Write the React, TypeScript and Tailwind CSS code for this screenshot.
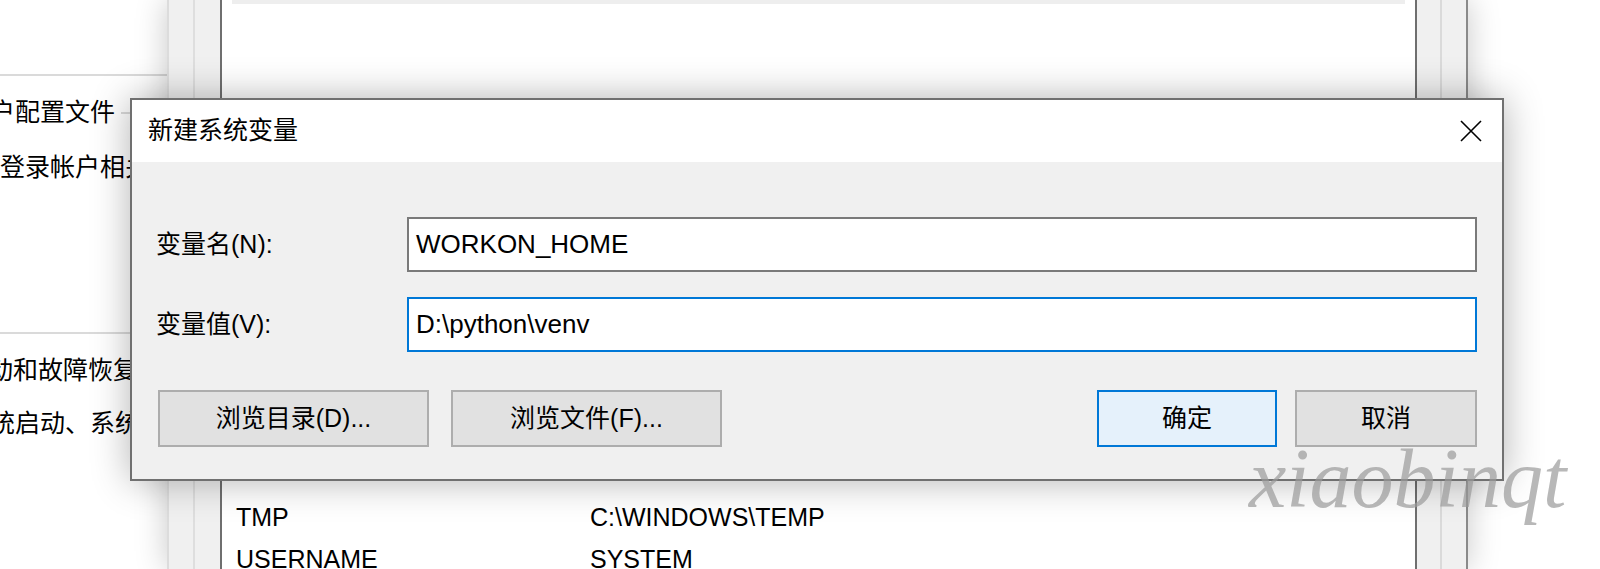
import React from 'react';

const ui = "font-['Liberation_Sans','Noto_Sans_CJK_SC',sans-serif]";

const rows = [
  { name: 'TEMP', value: 'C:\\WINDOWS\\TEMP' },
  { name: 'TMP', value: 'C:\\WINDOWS\\TEMP' },
  { name: 'USERNAME', value: 'SYSTEM' },
];

const CloseIcon = () => (
  <svg width="22" height="22" viewBox="0 0 22 22" fill="none">
    <path d="M1 1L21 21M21 1L1 21" stroke="#000" strokeWidth="1.6" />
  </svg>
);

const Field = ({ label, value, focused }: { label: string; value: string; focused?: boolean }) => (
  <div className="flex items-center">
    <div className="w-[275px] pl-[24px] text-[25px] text-black">{label}</div>
    <div
      className={`flex-1 h-[55px] bg-white border-2 flex items-center pl-[7px] text-[26px] text-black ${
        focused ? 'border-[#0078d7]' : 'border-[#7a7a7a]'
      }`}
    >
      {value}
    </div>
  </div>
);

const DialogButton = ({ label, width, primary }: { label: string; width: string; primary?: boolean }) => (
  <button
    className={`${width} h-[57px] border-2 text-[25px] text-black flex items-center justify-center ${
      primary ? 'bg-[#e5f1fb] border-[#0078d7]' : 'bg-[#e1e1e1] border-[#adadad]'
    }`}
  >
    {label}
  </button>
);

export default function App() {
  return (
    <div className={`relative w-[1600px] h-[569px] overflow-hidden bg-white ${ui}`}>
      <div className="flex h-full">
        {/* system properties window behind */}
        <div className="w-[167px] shrink-0 text-[25px] text-black whitespace-nowrap">
          <div className="mt-[74px] border-t-2 border-[#dadada]" />
          <div className="mt-[22px] flex items-center h-[30px]">
            <span className="-ml-[35px]">用户配置文件</span>
            <span className="ml-[6px] w-[40px] border-t-2 border-[#dadada]" />
          </div>
          <div className="mt-[25px] h-[30px] flex items-center">
            <span>登录帐户相关的桌面设置</span>
          </div>
          <div className="mt-[149px] border-t-2 border-[#dadada]" />
          <div className="mt-[22px] h-[30px] flex items-center">
            <span className="-ml-[37px]">启动和故障恢复</span>
          </div>
          <div className="mt-[23px] h-[30px] flex items-center">
            <span className="-ml-[35px]">系统启动、系统失败和调试信息</span>
          </div>
        </div>

        {/* environment variables window behind */}
        <div className="w-[1301px] shrink-0 flex bg-[#f0f0f0] border-x-2 border-l-[#dcdcdc] border-r-[#8a8a8a] shadow-[0_0_30px_rgba(0,0,0,0.22)] relative z-[1]">
          <div className="w-[26px] border-r-2 border-[#dedede]" />
          <div className="w-[25px]" />
          <div className="flex-1 bg-white border-x-2 border-[#6f6f6f] text-[25px] text-black">
            <div className="mx-[10px] h-[4px] bg-[#eeeeee]" />
            <div className="mt-[451px]">
              {rows.map((r, i) => (
                <div key={r.name} className={`flex h-[42px] items-center pl-[14px] ${i === 0 ? 'pb-[14px]' : ''}`}>
                  <span className="w-[354px]">{r.name}</span>
                  <span>{r.value}</span>
                </div>
              ))}
            </div>
          </div>
          <div className="w-[25px] border-r-2 border-[#dadada]" />
          <div className="w-[24px]" />
        </div>
        <div className="flex-1" />
      </div>

      {/* new system variable dialog */}
      <div className="absolute left-[130px] top-[98px] z-[2] w-[1374px] h-[383px] border-2 border-[#707070] bg-[#f0f0f0] shadow-[0_0_36px_rgba(0,0,0,0.3)] flex flex-col">
        <div className="h-[62px] bg-white flex items-center justify-between pl-[16px] pr-[20px]">
          <span className="text-[25px] text-black">新建系统变量</span>
          <CloseIcon />
        </div>
        <div className="flex-1 flex flex-col pt-[55px] pr-[25px]">
          <Field label="变量名(N):" value="WORKON_HOME" />
          <div className="h-[25px]" />
          <Field label="变量值(V):" value="D:\python\venv" focused />
          <div className="mt-[38px] flex items-center pl-[26px]">
            <DialogButton label="浏览目录(D)..." width="w-[271px]" />
            <div className="w-[22px]" />
            <DialogButton label="浏览文件(F)..." width="w-[271px]" />
            <div className="flex-1" />
            <DialogButton label="确定" width="w-[180px]" primary />
            <div className="w-[18px]" />
            <DialogButton label="取消" width="w-[182px]" />
          </div>
        </div>
      </div>

      {/* watermark */}
      <div className="absolute left-[1249px] top-[437px] z-[3] font-['Liberation_Serif',serif] italic text-[84px] leading-none text-[#9a9a9a]/70 pointer-events-none">
        xiaobinqt
      </div>
    </div>
  );
}
